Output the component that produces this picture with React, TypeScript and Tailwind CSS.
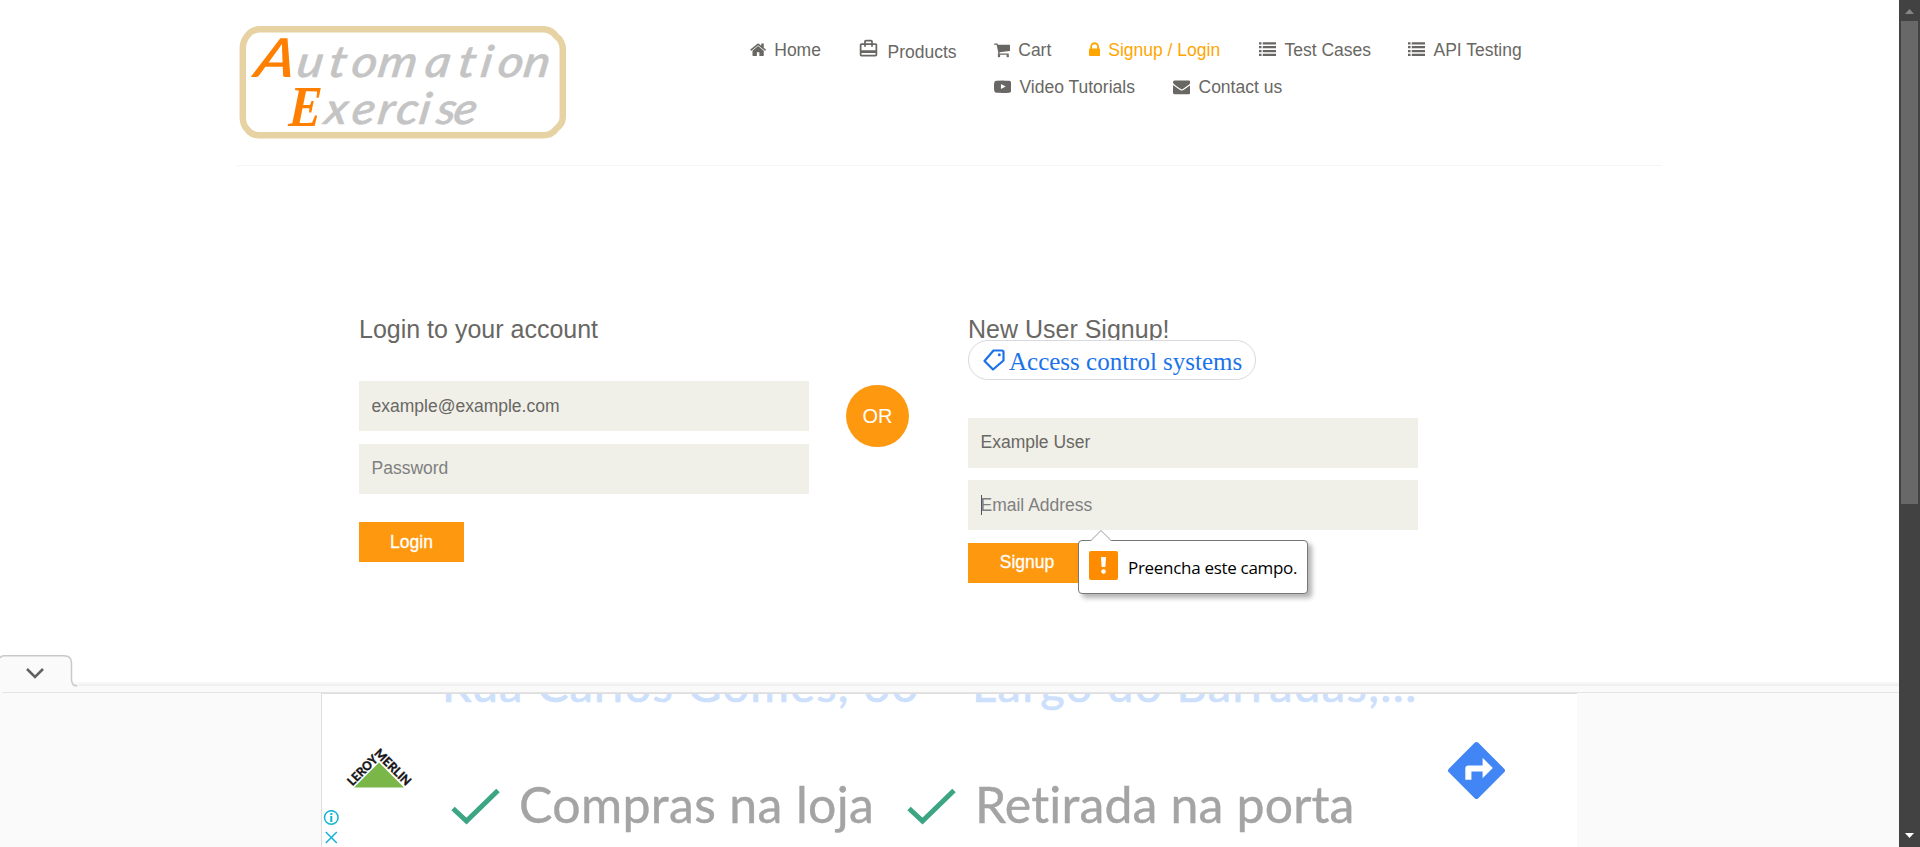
import React from "react";
import { MdCardTravel } from "react-icons/md";

const paths = {
  home: "M1472 992v480q0 26-19 45t-45 19h-384v-384h-256v384h-384q-26 0-45-19t-19-45v-480q0-1 .5-3t.5-3l575-474 575 474q1 2 1 6zm223-69l-62 74q-8 9-21 11h-3q-13 0-21-7l-692-577-692 577q-12 8-24 7-13-2-21-11l-62-74q-8-10-7-23.5t11-21.5l719-599q32-26 76-26t76 26l244 204v-195q0-14 9-23t23-9h192q14 0 23 9t9 23v408l219 182q10 8 11 21.5t-7 23.5z",
  cart: "M704 1536q0 52-38 90t-90 38-90-38-38-90 38-90 90-38 90 38 38 90zm896 0q0 52-38 90t-90 38-90-38-38-90 38-90 90-38 90 38 38 90zm128-1088v512q0 24-16.5 42.5t-40.5 21.5l-1044 122q13 60 13 70 0 16-24 64h920q26 0 45 19t19 45-19 45-45 19h-1024q-26 0-45-19t-19-45q0-11 8-31.5t16-36 21.5-40 15.5-29.5l-177-823h-204q-26 0-45-19t-19-45 19-45 45-19h256q16 0 28.5 6.5t19.5 15.5 13 24.5 8 26 5.5 29.5 4.5 26h1201q26 0 45 19t19 45z",
  lock: "M640 768h512v-192q0-106-75-181t-181-75-181 75-75 181v192zm832 96v576q0 40-28 68t-68 28h-960q-40 0-68-28t-28-68v-576q0-40 28-68t68-28h32v-192q0-184 132-316t316-132 316 132 132 316v192h32q40 0 68 28t28 68z",
  list: "M0 128h256v230h-256zM384 128h1408v230h-1408zM0 520h256v230h-256zM384 520h1408v230h-1408zM0 912h256v230h-256zM384 912h1408v230h-1408zM0 1304h256v230h-256zM384 1304h1408v230h-1408z",
  video: "M711 1128l484-250-484-253v503zm185-862q168 0 324.5 4.5t229.5 9.5l73 4q1 0 17 1.5t23 3 23.5 4.5 28.5 8 28 13 31 19.5 29 26.5q6 6 15.5 18.5t29 58.5 26.5 101q8 64 12.5 136.5t5.5 113.5v176q1 145-18 290-7 55-25 99.5t-32 61.5l-14 17q-14 15-29 26.5t-31 19-28 12.5-28.5 8-24 4.5-23 3-16.5 1.5q-251 19-627 19-207-2-359.5-6.5t-200.5-7.5l-49-4-36-4q-36-5-54.5-10t-51-21-56.5-41q-6-6-15.5-18.5t-29-58.5-26.5-101q-8-64-12.5-136.5t-5.5-113.5v-176q-1-145 18-290 7-55 25-99.5t32-61.5l14-17q14-15 29-26.5t31-19.5 28-13 28.500-8 23.500-4.500 23-3 17-1.500q251-18 627-18z",
  mail: "M1792 710v794q0 66-47 113t-113 47h-1472q-66 0-113-47t-47-113v-794q44 49 101 87 362 246 497 345 57 42 92.5 65.5t94.5 48 110 24.5h2q51 0 110-24.5t94.5-48 92.5-65.5q170-123 498-345 57-39 100-87zm0-294q0 79-49 151t-122 123q-376 261-468 325-10 7-42.5 31t-54 38.5-52 32.5-57.5 27-50 9h-2q-23 0-50-9t-57.5-27-52-32.5-54-38.5-42.5-31q-91-64-262-182.5t-205-142.5q-62-42-117-115.5t-55-136.5q0-78 41.5-130t118.5-52h1472q65 0 112.5 47t47.5 113z",
};

function NavItem({ icon, label, box, size, className = "" }: { icon: keyof typeof paths; label: string; box: string; size: string; className?: string }) {
  return (
    <li className={`flex shrink-0 items-center whitespace-nowrap ${className}`}>
      <svg viewBox={box} className={`mr-[8.5px] -mt-px h-[17.5px] shrink-0 ${size}`} fill="currentColor">
        <path d={paths[icon]} />
      </svg>
      <a>{label}</a>
    </li>
  );
}

function Logo() {
  return (
    <svg className="h-[117px] w-[332px] shrink-0" viewBox="0 0 332 117" fontFamily="Lato, sans-serif" fontStyle="italic">
      <path d="M22 6.200H307Q315 7 319 13Q325.800 18 325.800 26V94Q325.800 101 319 106Q315 112.200 306 112.200H22Q14 112.200 10 106Q5.800 102 5.800 94V26Q5.800 18 10 13Q14 7 22 6.200Z" fill="none" stroke="#e6d2a2" strokeWidth="6.500" />
      <g fill="#c4c4c4" stroke="#c4c4c4" strokeWidth="0.5" fontSize="44" fontWeight="500">
        <text transform="translate(0 54) scale(1.12 1) skewX(-8)" x="52 80.500 101 124.500 166.500 196 216 231.500 254.500">utomation</text>
        <text transform="translate(0 101) scale(1.1 1) skewX(-8)" x="78.500 103 126.500 143.500 164 180 195.500">xercise</text>
      </g>
      <g fill="#ff8000" fontSize="54">
        <text transform="translate(16 54) scale(1.15 1) skewX(-10)" fontWeight="600">A</text>
        <text transform="translate(51 103) skewX(-3)" fontWeight="700" fontFamily="Liberation Serif, serif" fontSize="58" textLength="33" lengthAdjust="spacingAndGlyphs">E</text>
      </g>
    </svg>
  );
}

const field = "h-[50px] w-[450px] bg-[#f0f0e9] px-[12.5px] text-[17.5px] text-[#696763] placeholder:text-[#7f7f7f] outline-none";
const button = "flex h-10 items-center justify-center bg-[#fe980f] text-[17.5px] text-white [-webkit-text-stroke:0.3px_white]";

function Check({ className = "" }: { className?: string }) {
  return (
    <svg className={`h-[37px] w-[49px] shrink-0 ${className}`} viewBox="0 0 49 37" fill="none" stroke="#3ca583" strokeWidth="5">
      <path d="M2 20.500L15.500 33L47 2.500" />
    </svg>
  );
}

export default function App() {
  return (
    <div className="flex h-[847px] w-[1920px] overflow-hidden bg-white font-['Liberation_Sans',Arial,sans-serif] text-[17.5px] text-[#696763]">
      <div className="flex w-[1899px] shrink-0 flex-col overflow-hidden">
        <header className="mx-auto flex h-[166px] w-[1425px] items-start border-b border-[#f5f5f5] pt-[23px]">
          <Logo />
          <nav className="ml-[180.5px] pt-[9px] leading-[37px]">
            <ul className="flex h-[37px]">
              <NavItem icon="home" label="Home" box="64 0 1664 1792" size="w-[16.25px]" className="w-[109px]" />
              <li className="flex w-[135px] items-center">
                <MdCardTravel className="-ml-px mr-[9px] mt-[-5px] h-[21px] w-[21px]" />
                <a className="pt-[3px]">Products</a>
              </li>
              <NavItem icon="cart" label="Cart" box="64 0 1664 1792" size="w-[16.25px]" className="w-[95px]" />
              <NavItem icon="lock" label="Signup / Login" box="320 0 1152 1792" size="w-[11.25px]" className="w-[170px] text-[#ffa500]" />
              <NavItem icon="list" label="Test Cases" box="0 0 1792 1792" size="w-[17.5px]" className="w-[149px]" />
              <NavItem icon="list" label="API Testing" box="0 0 1792 1792" size="w-[17.5px]" />
            </ul>
            <ul className="flex h-[37px] pl-[244px]">
              <NavItem icon="video" label="Video Tutorials" box="0 0 1792 1792" size="w-[17.5px]" className="w-[179px]" />
              <NavItem icon="mail" label="Contact us" box="0 0 1792 1792" size="w-[17.5px]" />
            </ul>
          </nav>
        </header>

        <main className="flex h-[489px] shrink-0 items-start pl-[359px] pt-[149px]">
          <form className="flex w-[450px] flex-col items-start">
            <h2 className="h-[66px] text-[25px] leading-[28px]">Login to your account</h2>
            <input className={field} defaultValue="example@example.com" />
            <input className={`mt-[13px] pb-[2px] ${field}`} placeholder="Password" />
            <button type="button" className={`mt-7 w-[105px] ${button}`}>Login</button>
          </form>
          <div className="ml-[37px] mt-[70px] flex h-[62px] w-[63px] items-center justify-center rounded-full bg-[#fe980f] text-[20px] text-white">OR</div>
          <form className="ml-[59px] flex w-[450px] flex-col items-start">
            <h2 className="h-[25px] text-[25px] leading-[28px]">New User Signup!</h2>
            <div className="relative flex h-10 w-[288px] items-center rounded-full border border-[#d8dadf] bg-white pl-[14px] font-['Liberation_Serif',serif] text-[25px] text-[#1a73e8]">
              <svg className="mr-1 h-[22px] w-[22px] shrink-0" viewBox="0 0 22 22" fill="none" stroke="currentColor" strokeWidth="2.200" strokeLinejoin="round">
                <path d="M10.500 1.500H19Q20.500 1.500 20.500 3V11.500L10 20.500L1.500 12Z" />
                <circle cx="16.300" cy="5.800" r="1.500" fill="currentColor" stroke="none" />
              </svg>
              <span className="pt-[3px] whitespace-nowrap">Access control systems</span>
            </div>
            <input className={`mt-[38px] pb-[2px] ${field}`} defaultValue="Example User" />
            <div className="relative mt-3">
              <input className={field} placeholder="Email Address" />
              <div className="absolute left-[13px] top-[15px] h-5 w-px bg-[#555]" />
              <div className="absolute left-[110px] top-[60px] z-10 flex h-[54px] w-[230px] items-center rounded-[4px] border border-[#777] bg-white pl-[10px] shadow-[4px_4px_5px_rgba(0,0,0,0.3)]">
                <svg className="absolute left-[11px] top-[-11px] h-[12px] w-[22px]" viewBox="0 0 22 12">
                  <path d="M0.500 11L11 0.500L21.500 11V12H0.500Z" fill="white" />
                  <path d="M0.500 11L11 0.500L21.500 11" fill="none" stroke="#999" />
                </svg>
                <svg className="mt-[-3px] h-[29px] w-[29px] shrink-0" viewBox="0 0 29 29">
                  <rect width="29" height="29" rx="2" fill="#ff8c00" />
                  <path d="M12 6h5l-.6 10h-3.800z" fill="white" />
                  <circle cx="14.500" cy="20.500" r="2.300" fill="white" />
                </svg>
                <span className="ml-[10px] whitespace-nowrap pt-px font-['Open_Sans',sans-serif] text-[17px] tracking-[-0.3px] text-black">Preencha este campo.</span>
              </div>
            </div>
            <button type="button" className={`mt-[13px] w-[118px] pb-[2px] ${button}`}>Signup</button>
          </form>
        </main>

        <section className="relative flex h-[192px] shrink-0 flex-col">
          <div className="z-10 flex h-[38px] flex-col">
            <svg className="h-[38px] w-[1899px]" viewBox="0 0 1899 38">
              <defs>
                <linearGradient id="edge" x1="0" y1="0" x2="0" y2="1">
                  <stop offset="0" stopColor="#ffffff" />
                  <stop offset="1" stopColor="#ededed" />
                </linearGradient>
              </defs>
              <rect x="73" y="26" width="1826" height="5" fill="url(#edge)" />
              <rect y="31" width="1899" height="7" fill="#fafafa" />
              <path d="M0 3Q1 .8 4 .8H64Q71.500 .8 71.500 8V24Q71.500 31 77 31V34H0Z" fill="#fafafa" />
              <path d="M0 3Q1 .8 4 .8H64Q71.500 .8 71.500 8V24Q71.500 31 77 31" fill="none" stroke="#c9c9c9" strokeWidth="1.500" />
              <path d="M27 14L35 22L43 14" fill="none" stroke="#616161" strokeWidth="2.500" />
              <path d="M2 37.500H1899" stroke="#e4e4e4" />
            </svg>
          </div>
          <div className="flex h-[154px] justify-start bg-[#fafafa] pl-[321px]">
            <div className="relative h-[154px] w-[1256px] overflow-hidden border-l border-t border-[#dedede] bg-white font-[Lato,sans-serif] [font-variant-ligatures:none]">
              <div className="mt-[-40px] flex h-[80px] whitespace-nowrap text-[47px] leading-[60px] text-[#cce0fc] [-webkit-text-stroke:0.7px_#cce0fc]">
                <span className="ml-[120px] w-[530px] tracking-[1.2px]">Rua Carlos Gomes, 60 -</span>
                <span className="tracking-[1.4px]">Largo do Barradas,...</span>
              </div>
              <svg className="absolute left-[22px] top-[51px] h-[46px] w-[70px]" viewBox="0 0 70 46" fontFamily="Lato, sans-serif" fontWeight="900" fontSize="12.500" fill="#171717" stroke="#171717" strokeWidth="0.300">
                <path d="M35 17.500L60 42.500H10Z" fill="#7ab648" stroke="none" />
                <text transform="translate(8.500 41.500) rotate(-45)" textLength="37" lengthAdjust="spacingAndGlyphs">LEROY</text>
                <text transform="translate(29.500 9) rotate(45)" textLength="46" lengthAdjust="spacingAndGlyphs">MERLIN</text>
              </svg>
              <svg className="absolute left-0 top-[116px] h-[36px] w-[18px]" viewBox="0 0 18 36" fill="none" stroke="#12b4d2" strokeWidth="1.500">
                <circle cx="9.300" cy="7.500" r="6.800" />
                <path d="M9.300 6V12M9.300 3V5" strokeWidth="2" />
                <path d="M3.800 22L14.800 33M14.800 22L3.800 33" />
              </svg>
              <div className="mt-[37px] flex h-[70px] items-center whitespace-nowrap text-[50px] leading-[60px] text-[#a4a4a4] [-webkit-text-stroke:0.4px_#a4a4a4]">
                <Check className="ml-[129px]" />
                <span className="ml-[19px] w-[367px] pb-1 tracking-[0.35px]">Compras na loja</span>
                <Check className="ml-[21px]" />
                <span className="ml-[19px] pb-1 tracking-[0.15px]">Retirada na porta</span>
              </div>
              <svg className="absolute left-[1124px] top-[46px] h-[61px] w-[61px]" viewBox="0 0 60 60">
                <rect x="9.500" y="9.500" width="41" height="41" rx="2.500" transform="rotate(45 30 30)" fill="#4285f4" />
                <path d="M19 39V28Q19 25 22 25H36V17.500L46 27.500L36 37.500V31H25V39Z" fill="white" />
              </svg>
            </div>
          </div>
        </section>
      </div>
      <aside className="flex w-[21px] shrink-0 flex-col items-center justify-between bg-[#424242]">
        <div className="flex flex-col items-center">
          <svg className="h-[21px] w-[17px]" viewBox="0 0 17 21"><path d="M4 14L8.500 9L13 14Z" fill="#868686" /></svg>
          <div className="h-[483px] w-[17px] bg-[#686868]" />
        </div>
        <svg className="h-[21px] w-[17px]" viewBox="0 0 17 21"><path d="M4 7L8.500 12L13 7Z" fill="white" /></svg>
      </aside>
    </div>
  );
}
